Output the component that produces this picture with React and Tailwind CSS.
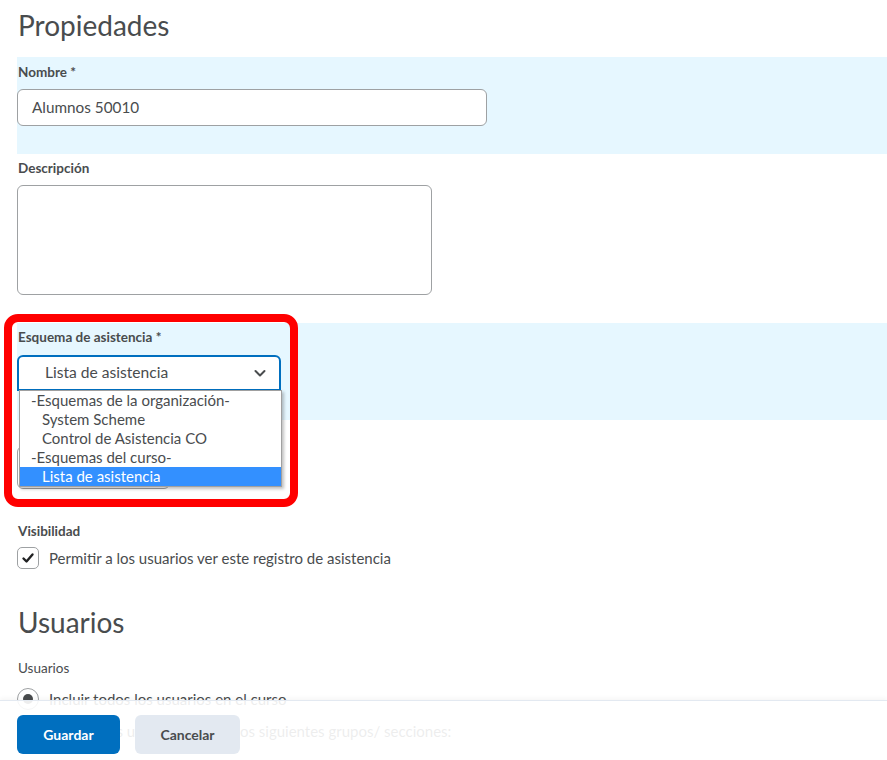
import React from "react";

const schemeOptions = [
  { label: "-Esquemas de la organización-", group: true },
  { label: "System Scheme" },
  { label: "Control de Asistencia CO" },
  { label: "-Esquemas del curso-", group: true },
  { label: "Lista de asistencia", selected: true },
];

const Label = ({ children, className = "" }) => (
  <div className={`text-[13.5px] leading-[20px] font-bold text-[#494c4e] pl-[1px] ${className}`}>
    {children}
  </div>
);

export default function App() {
  return (
    <div className="relative h-[760px] bg-white font-['Lato','Noto_Sans',sans-serif] text-[#494c4e] overflow-hidden">
      <div className="pl-[17px]">
        {/* Propiedades */}
        <h1 className="pt-[6px] h-[57px] text-[28px] leading-[38px] pl-[1px]">Propiedades</h1>

        <div className="bg-[#e6f7ff] pt-[5px] pb-[28px]">
          <Label>Nombre *</Label>
          <div className="mt-[7px] w-[470px] h-[37px] rounded-[6px] border border-[#9ea1a3] bg-white flex items-center pl-[14px] text-[15.3px]">
            Alumnos 50010
          </div>
        </div>

        <Label className="mt-[4px]">Descripción</Label>
        <div className="mt-[7px] w-[415px] h-[110px] rounded-[6px] border border-[#9ea1a3] bg-white" />

        {/* Esquema de asistencia */}
        <div className="mt-[28px] bg-[#e6f7ff] pt-[4px] pb-[29px]">
          <Label>Esquema de asistencia *</Label>
          <div className="relative mt-[8px] w-[264px]">
            <div className="h-[36px] rounded-t-[6px] border-2 border-[#006fbf] bg-white flex items-center justify-between pl-[26px] pr-[12px] text-[15.6px]">
              <span>Lista de asistencia</span>
              <svg width="14" height="14" viewBox="0 0 14 14" fill="none">
                <path d="M2.5 5L7 9.5L11.5 5" stroke="#494c4e" strokeWidth="2" strokeLinecap="round" strokeLinejoin="round" />
              </svg>
            </div>
            <ul className="absolute z-20 left-[2px] top-[35px] w-[263px] bg-white border border-[#a0a0a0] shadow-[2px_2px_3px_rgba(0,0,0,0.25)] text-[15px] leading-[19px]">
              {schemeOptions.map((o) => (
                <li
                  key={o.label}
                  className={`h-[19px] whitespace-nowrap ${o.group ? "pl-[11px]" : "pl-[22px]"} ${
                    o.selected ? "bg-[#3390ff] text-white" : "text-[#494c4e]"
                  }`}
                >
                  {o.label}
                </li>
              ))}
            </ul>
          </div>
        </div>

        {/* hidden field behind the list */}
        <div className="mt-[26px] w-[153px] h-[43px] rounded-[6px] border border-[#9ea1a3]" />

        {/* Visibilidad */}
        <Label className="mt-[32px]">Visibilidad</Label>
        <div className="mt-[6px] flex items-center gap-[10px]">
          <div className="w-[22px] h-[22px] rounded-[5px] border border-[#9ea1a3] bg-white flex items-center justify-center">
            <svg width="14" height="14" viewBox="0 0 14 14" fill="none">
              <path d="M2.5 7.5L5.5 10.5L11.5 3.5" stroke="#202122" strokeWidth="2.4" strokeLinecap="round" strokeLinejoin="round" />
            </svg>
          </div>
          <span className="text-[15px] leading-[22px]">Permitir a los usuarios ver este registro de asistencia</span>
        </div>

        {/* Usuarios */}
        <h2 className="mt-[34px] text-[28px] leading-[38px] pl-[1px]">Usuarios</h2>
        <div className="mt-[17px] text-[13.5px] leading-[20px] pl-[1px]">Usuarios</div>
        <div className="mt-[10px] flex items-center gap-[10px]">
          <div className="w-[22px] h-[22px] rounded-full border border-[#9ea1a3] bg-white flex items-center justify-center">
            <div className="w-[10px] h-[10px] rounded-full bg-[#494c4e]" />
          </div>
          <span className="text-[15px] leading-[22px]">Incluir todos los usuarios en el curso</span>
        </div>
        <div className="mt-[10px] flex items-center gap-[10px]">
          <div className="w-[22px] h-[22px] rounded-full border border-[#9ea1a3] bg-white" />
          <span className="text-[15px] leading-[22px]">Incluir a los usuarios solo de los siguientes grupos/ secciones:</span>
        </div>
      </div>

      {/* sticky footer */}
      <div className="absolute left-0 right-0 top-[700px] h-[60px] bg-white/90 border-t border-[#e3e9f1] shadow-[0_-2px_4px_rgba(0,0,0,0.04)] z-10 flex gap-[15px] pl-[17px] pt-[14px]">
        <button className="w-[103px] h-[39px] rounded-[6px] bg-[#006fbf] text-white text-[14px] font-bold">Guardar</button>
        <button className="w-[105px] h-[39px] rounded-[6px] bg-[#e3e9f1] text-[#494c4e] text-[14px] font-bold">Cancelar</button>
      </div>

      {/* red highlight frame */}
      <div className="absolute left-[4px] top-[314px] w-[294px] h-[193px] rounded-[14px] border-[8px] border-[#ff0000] z-30 pointer-events-none" />
    </div>
  );
}
